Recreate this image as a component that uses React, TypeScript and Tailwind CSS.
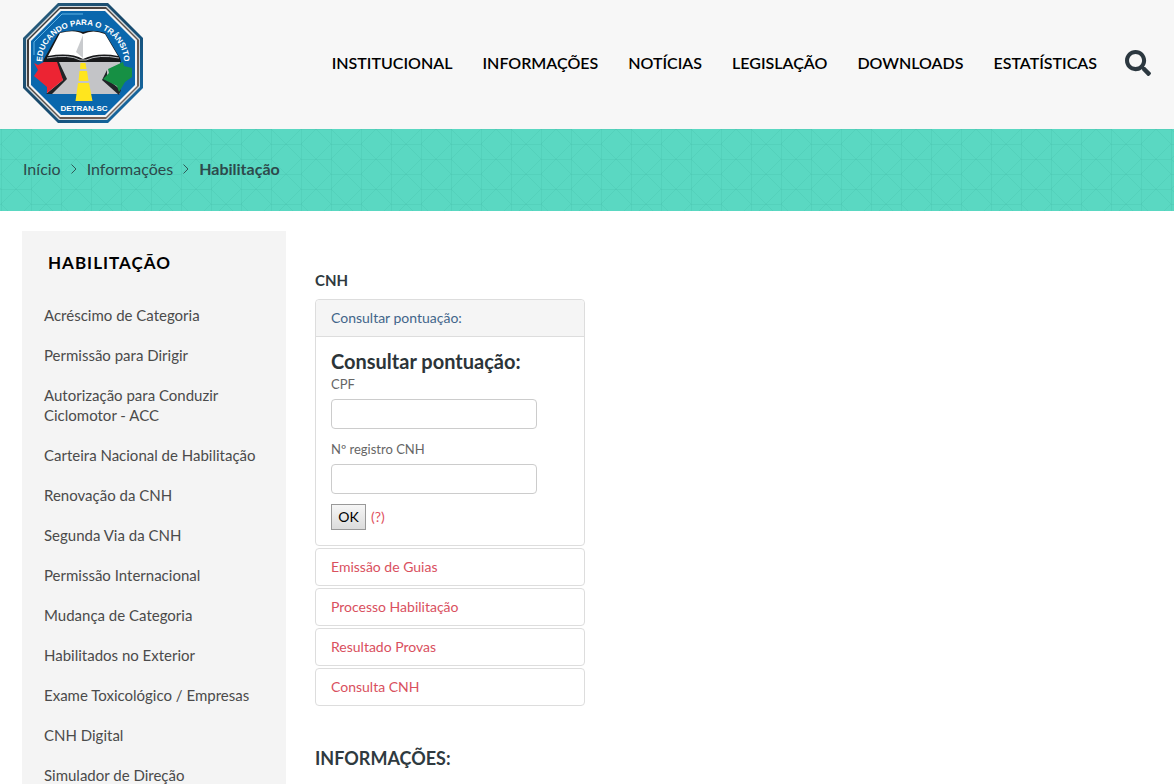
import { FaSearch } from 'react-icons/fa';

const navItems = ['INSTITUCIONAL', 'INFORMAÇÕES', 'NOTÍCIAS', 'LEGISLAÇÃO', 'DOWNLOADS', 'ESTATÍSTICAS'];

const sideLinks = [
  'Acréscimo de Categoria',
  'Permissão para Dirigir',
  'Autorização para Conduzir Ciclomotor - ACC',
  'Carteira Nacional de Habilitação',
  'Renovação da CNH',
  'Segunda Via da CNH',
  'Permissão Internacional',
  'Mudança de Categoria',
  'Habilitados no Exterior',
  'Exame Toxicológico / Empresas',
  'CNH Digital',
  'Simulador de Direção',
];

const panels = ['Emissão de Guias', 'Processo Habilitação', 'Resultado Provas', 'Consulta CNH'];

function Logo() {
  return (
    <svg viewBox="0 0 120 120" className="h-[120px] w-[120px]" role="img" aria-label="DETRAN-SC">
      <defs>
        <linearGradient id="rim" x1="0" y1="0" x2="1" y2="1">
          <stop offset="0" stopColor="#2a5f80" />
          <stop offset="0.5" stopColor="#17486a" />
          <stop offset="1" stopColor="#1470b0" />
        </linearGradient>
        <linearGradient id="bronze" x1="0" y1="0" x2="1" y2="1">
          <stop offset="0" stopColor="#33302f" />
          <stop offset="1" stopColor="#7d6a60" />
        </linearGradient>
        <path id="arc" d="M19 65L19 59A41 37 0 0 1 101 59L101 65" />
      </defs>
      {/* rings, from the outside in */}
      <path d="M35 0H85L120 35V85L85 120H35L0 85V35Z" fill="url(#rim)" />
      <path d="M36 3H84L117 36V84L84 117H36L3 84V36Z" fill="#d3dade" />
      <path d="M37 4H83L116 37V83L83 116H37L4 83V37Z" fill="url(#bronze)" />
      <path d="M37 6H83L114 37V83L83 114H37L6 83V37Z" fill="#f4f4f4" />
      <path d="M38 8H82L112 38V82L82 112H38L8 82V38Z" fill="#0a67ad" />
      <path d="M11 52V39L39 11H60" fill="none" stroke="#5fb4e4" strokeWidth="1" />
      {/* road */}
      <path d="M24 58H97V91H24Z" fill="#c3c4c7" />
      <path d="M57.500 60H62.500L63.500 66H57ZM56.500 68H64L65.500 78H55.500ZM55 80H66L69.500 98H52.500Z" fill="#ffe51e" />
      {/* arrows */}
      <path d="M36 59L44 76L29 91L23 91L40 77L30 59Z" fill="#202427" />
      <path d="M84 67L79 77L96 92L98 87L84 76Z" fill="#202427" />
      <path d="M11 60L15 62L21 59H34L40 77L24 90L24 84L11 73L15 67Z" fill="#ec2433" />
      <path d="M100 59L101 63L109 65V74L102 79L96 89L94 83L80 76L86 70L85 66Z" fill="#169044" />
      {/* book */}
      <path d="M35 31L38 29Q52 26 60 29Q70 26 82 30L97 55L98 59H20L21 56Z" fill="#17181a" />
      <path d="M37 30Q52 26 60 31V56Q47 49 25 53Z" fill="#fff" />
      <path d="M60 31Q70 26 82 31L95 53Q75 49 60 56Z" fill="#fff" />
      <path d="M60 32L53 49L60 55Z" fill="#c9cbce" />
      <path d="M24 55Q46 51 57 57H63Q76 51 96 55" fill="none" stroke="#b9bbbe" strokeWidth="1" />
      <text className="fill-white font-['Liberation_Sans'] text-[8px] font-bold">
        <textPath href="#arc" startOffset="50%" textAnchor="middle">EDUCANDO PARA O TRÂNSITO</textPath>
      </text>
      <text x="61" y="108" textAnchor="middle" className="fill-white font-['Liberation_Sans'] text-[8px] font-bold">
        DETRAN-SC
      </text>
    </svg>
  );
}

function BandPattern() {
  return (
    <svg className="absolute inset-0 h-full w-full" aria-hidden="true">
      <defs>
        <pattern id="lattice" x="1" y="0" width="60" height="30" patternUnits="userSpaceOnUse">
          <path
            d="M0.500 0V30M30.500 0V30M0 0.500H30M30 15.500H60M15 0L30 15L15 30L0 15ZM30 0L60 30M60 0L30 30"
            fill="none"
            stroke="#3fb8a4"
            strokeOpacity="0.220"
          />
        </pattern>
      </defs>
      <rect width="100%" height="100%" fill="url(#lattice)" />
    </svg>
  );
}

function Chevron() {
  return (
    <svg viewBox="0 0 8 12" className="h-3 w-2" fill="none" stroke="#2f5a58" aria-hidden="true">
      <path d="M1.500 1.500L6 6L1.500 10.500" />
    </svg>
  );
}

export default function App() {
  return (
    <div className="h-screen overflow-hidden bg-white font-['Lato',sans-serif] text-[#2f3a40]">
      <header className="flex h-[129px] items-center justify-between bg-[#f7f7f7] px-[23px] pb-1">
        <a href="#">
          <Logo />
        </a>
        <nav className="flex items-center gap-[30px] text-base font-semibold text-black">
          {navItems.map((item) => (
            <a key={item} href="#">{item}</a>
          ))}
          <button type="button" aria-label="Buscar" className="-ml-[2px]">
            <FaSearch className="size-[26px] text-[#2c3840]" />
          </button>
        </nav>
      </header>

      <div className="relative flex h-[82px] items-center bg-[#5ad8c2] px-[23px] pb-[2px]">
        <BandPattern />
        <ol className="relative flex items-center gap-[9px] text-base text-[#2d4a4c]">
          <li><a href="#">Início</a></li>
          <li><Chevron /></li>
          <li><a href="#">Informações</a></li>
          <li><Chevron /></li>
          <li className="font-bold">Habilitação</li>
        </ol>
      </div>

      <div className="flex items-start gap-[29px] px-[22px] pt-5">
        <aside className="w-[264px] shrink-0 bg-[#f4f4f4] px-[22px] pt-5">
          <h2 className="px-1 text-[17px] leading-6 font-bold tracking-[1px] text-black">HABILITAÇÃO</h2>
          <ul className="mt-[30px] space-y-5 text-[15px] leading-5 text-[#4b4b4b]">
            {sideLinks.map((link) => (
              <li key={link}><a href="#">{link}</a></li>
            ))}
          </ul>
        </aside>

        <main className="w-[270px] pt-[39px]">
          <h3 className="text-[15px] leading-5 font-bold">CNH</h3>
          <section className="mt-[9px] rounded border border-[#ddd]">
            <h4 className="rounded-t border-b border-[#ddd] bg-[#f5f5f5] px-[15px] py-2 text-sm leading-5 text-[#42658a]">
              <a href="#">Consultar pontuação:</a>
            </h4>
            <form className="px-[15px] pt-3 pb-[15px] text-[13px] leading-5 text-[#666]">
              <h5 className="text-xl leading-[25px] font-bold text-[#2c3438]">Consultar pontuação:</h5>
              <label htmlFor="cpf" className="block">CPF</label>
              <input id="cpf" type="text" className="mt-[5px] block h-[30px] w-[206px] rounded border border-[#ccc] bg-white px-2" />
              <label htmlFor="registro" className="mt-[10px] block">Nº registro CNH</label>
              <input id="registro" type="text" className="mt-[5px] block h-[30px] w-[206px] rounded border border-[#ccc] bg-white px-2" />
              <div className="mt-[10px] flex items-center gap-[5px] text-sm">
                <button type="button" className="h-[26px] w-[35px] border border-[#999] bg-linear-to-b from-[#f6f6f6] to-[#dcdcdc] text-black">OK</button>
                <a href="#" className="text-[#e0505e]">(?)</a>
              </div>
            </form>
          </section>
          {panels.map((panel) => (
            <h4 key={panel} className="mt-[2px] rounded border border-[#ddd] px-[15px] py-2 text-sm leading-5 text-[#d9505e]">
              <a href="#">{panel}</a>
            </h4>
          ))}
          <h3 className="mt-10 text-lg leading-6 font-bold">INFORMAÇÕES:</h3>
        </main>
      </div>
    </div>
  );
}
